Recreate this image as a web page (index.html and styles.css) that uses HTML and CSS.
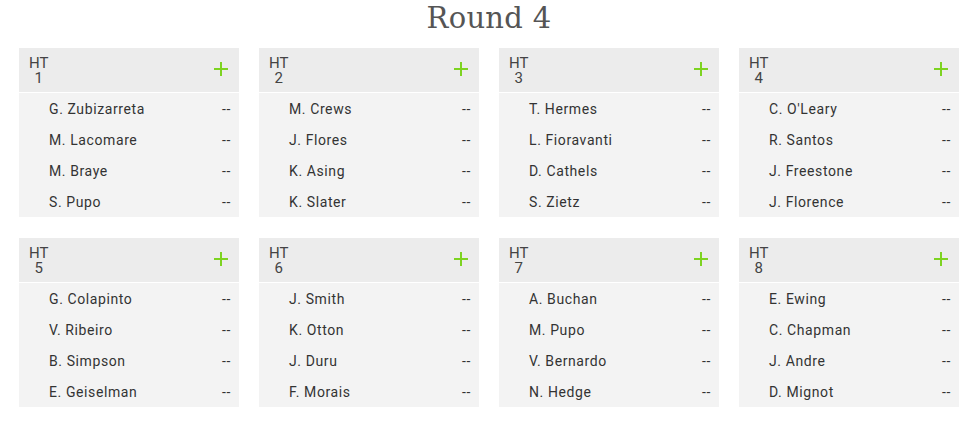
FILE: index.html
```html
<!DOCTYPE html>
<html>
<head>
<meta charset="utf-8">
<link rel="stylesheet" href="styles.css">
</head>
<body>
<div class="page">
  <h1 class="title">Round 4</h1>
  <div class="grid">
    <div class="card">
      <div class="card-head"><div class="ht">HT<br>1</div><span class="plus"></span></div>
      <div class="row"><span>G. Zubizarreta</span><span>--</span></div>
      <div class="row"><span>M. Lacomare</span><span>--</span></div>
      <div class="row"><span>M. Braye</span><span>--</span></div>
      <div class="row"><span>S. Pupo</span><span>--</span></div>
    </div>
    <div class="card">
      <div class="card-head"><div class="ht">HT<br>2</div><span class="plus"></span></div>
      <div class="row"><span>M. Crews</span><span>--</span></div>
      <div class="row"><span>J. Flores</span><span>--</span></div>
      <div class="row"><span>K. Asing</span><span>--</span></div>
      <div class="row"><span>K. Slater</span><span>--</span></div>
    </div>
    <div class="card">
      <div class="card-head"><div class="ht">HT<br>3</div><span class="plus"></span></div>
      <div class="row"><span>T. Hermes</span><span>--</span></div>
      <div class="row"><span>L. Fioravanti</span><span>--</span></div>
      <div class="row"><span>D. Cathels</span><span>--</span></div>
      <div class="row"><span>S. Zietz</span><span>--</span></div>
    </div>
    <div class="card">
      <div class="card-head"><div class="ht">HT<br>4</div><span class="plus"></span></div>
      <div class="row"><span>C. O'Leary</span><span>--</span></div>
      <div class="row"><span>R. Santos</span><span>--</span></div>
      <div class="row"><span>J. Freestone</span><span>--</span></div>
      <div class="row"><span>J. Florence</span><span>--</span></div>
    </div>
    <div class="card">
      <div class="card-head"><div class="ht">HT<br>5</div><span class="plus"></span></div>
      <div class="row"><span>G. Colapinto</span><span>--</span></div>
      <div class="row"><span>V. Ribeiro</span><span>--</span></div>
      <div class="row"><span>B. Simpson</span><span>--</span></div>
      <div class="row"><span>E. Geiselman</span><span>--</span></div>
    </div>
    <div class="card">
      <div class="card-head"><div class="ht">HT<br>6</div><span class="plus"></span></div>
      <div class="row"><span>J. Smith</span><span>--</span></div>
      <div class="row"><span>K. Otton</span><span>--</span></div>
      <div class="row"><span>J. Duru</span><span>--</span></div>
      <div class="row"><span>F. Morais</span><span>--</span></div>
    </div>
    <div class="card">
      <div class="card-head"><div class="ht">HT<br>7</div><span class="plus"></span></div>
      <div class="row"><span>A. Buchan</span><span>--</span></div>
      <div class="row"><span>M. Pupo</span><span>--</span></div>
      <div class="row"><span>V. Bernardo</span><span>--</span></div>
      <div class="row"><span>N. Hedge</span><span>--</span></div>
    </div>
    <div class="card">
      <div class="card-head"><div class="ht">HT<br>8</div><span class="plus"></span></div>
      <div class="row"><span>E. Ewing</span><span>--</span></div>
      <div class="row"><span>C. Chapman</span><span>--</span></div>
      <div class="row"><span>J. Andre</span><span>--</span></div>
      <div class="row"><span>D. Mignot</span><span>--</span></div>
    </div>
  </div>
</div>
</body>
</html>
```
FILE: styles.css
```css
html, body {
  margin: 0;
  padding: 0;
  background: #fff;
}
body {
  font-family: Roboto, "Liberation Sans", sans-serif;
  color: #333;
}
.page {
  width: 940px;
  margin: 0 20px 0 19px;
}
.title {
  margin: 0;
  height: 48px;
  line-height: 36px;
  font-family: "DejaVu Serif", serif;
  font-weight: 300;
  font-size: 29px;
  color: #555;
  text-align: center;
  letter-spacing: 0.3px;
}
.grid {
  display: grid;
  grid-template-columns: repeat(4, 220px);
  column-gap: 20px;
  row-gap: 21px;
}
.card {
  background: #f3f3f3;
}
.card-head {
  height: 44px;
  background: #ececec;
  border-bottom: 1px solid #fff;
  display: flex;
  align-items: center;
  justify-content: space-between;
  padding: 0 11px 0 10px;
}
.ht {
  font-size: 15px;
  line-height: 15px;
  text-align: center;
  color: #444;
  padding-top: 1px;
}
.plus {
  position: relative;
  width: 14px;
  height: 14px;
  margin-top: -3px;
}
.plus::before, .plus::after {
  content: "";
  position: absolute;
  background: #7ed321;
}
.plus::before {
  left: 0;
  top: 6px;
  width: 14px;
  height: 2px;
}
.plus::after {
  top: 0;
  left: 6px;
  width: 2px;
  height: 14px;
}
.row {
  height: 31px;
  display: flex;
  align-items: center;
  justify-content: space-between;
  padding: 0 8px 0 30px;
  font-size: 14px;
  letter-spacing: 0.6px;
  color: #333;
}
```
